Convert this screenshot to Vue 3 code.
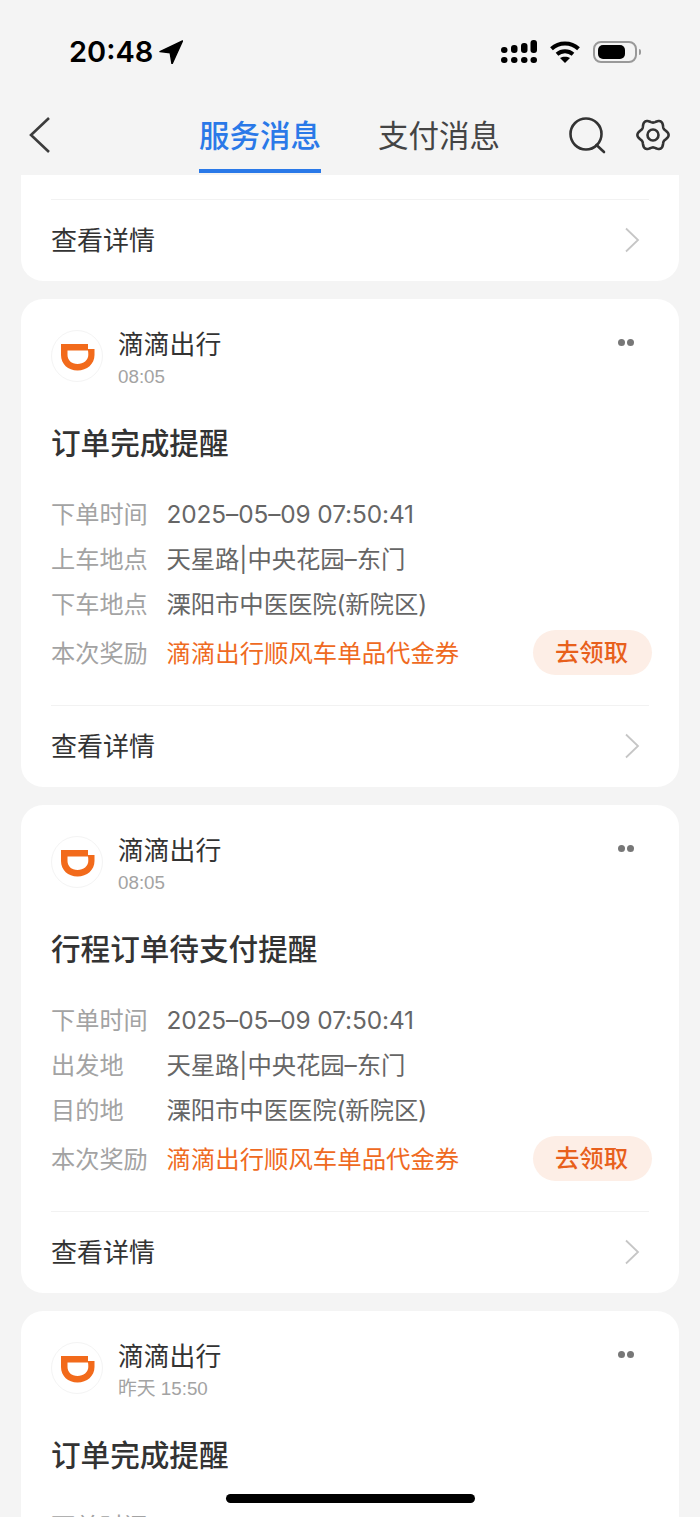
<template>
  <div class="phone">
    <!-- Status bar -->
    <div class="status-bar">
      <div class="clock">
        <span>20:48</span>
        <svg class="loc" width="24" height="24" viewBox="0 0 24 24">
          <path d="M23.500 1 1 11.600l10.200 1.200L13 24z" fill="#000" stroke="#000" stroke-width="1.400" stroke-linejoin="round" />
        </svg>
      </div>
      <div class="status-icons">
        <svg width="36" height="23" viewBox="0 0 36 23" fill="#000">
          <rect v-for="(d, i) in signalDots" :key="i" :x="d.x" :y="d.y" width="6.500" :height="d.h" rx="3" />
        </svg>
        <svg class="wifi" width="30" height="22" viewBox="0 0 30 22" fill="none" stroke="#000" stroke-width="4">
          <path d="M1.500 7.800C9 .8 21 .8 28.500 7.800" />
          <path d="M7 13.200c4.600-4 11.400-4 16 0" />
          <path d="M15 22 10 17c2.800-1.700 7.200-1.700 10 0z" fill="#000" stroke="none" />
        </svg>
        <div class="battery">
          <div class="battery-fill"></div>
        </div>
        <div class="battery-cap"></div>
      </div>
    </div>

    <!-- Nav -->
    <div class="nav">
      <svg class="back" width="24" height="36" viewBox="0 0 24 36" fill="none" stroke="#3c3c3c" stroke-width="2.600">
        <path d="M22 1 4 18 22 35" />
      </svg>
      <div class="tabs">
        <div
          v-for="(tab, index) in tabs"
          :key="tab"
          :class="['tab', { active: index === 0 }]"
        >
          {{ tab }}
        </div>
      </div>
      <svg class="search" width="38" height="38" viewBox="0 0 38 38" fill="none" stroke="#333" stroke-width="2.600">
        <circle cx="17" cy="17" r="15.500" />
        <path d="M27.500 28 35 35" stroke-linecap="round" />
      </svg>
      <svg class="gear" width="34" height="34" viewBox="0 0 34 34" fill="none" stroke="#333" stroke-width="2.600" stroke-linejoin="round">
        <path :d="gearPath" />
        <circle cx="17" cy="17" r="5.500" />
      </svg>
    </div>

    <!-- Message list -->
    <div class="list">
      <div class="card card-cut">
        <div class="detail">
          <span>查看详情</span>
          <svg width="16" height="26" viewBox="0 0 16 26" fill="none" stroke="#c6c6c6" stroke-width="1.800">
            <path d="M2 1.500 14 13 2 24.500" />
          </svg>
        </div>
      </div>

      <div v-for="(msg, i) in messages" :key="i" class="card">
        <div class="card-head">
          <div class="logo">
            <svg width="34" height="27" viewBox="0 0 34 27">
              <path
                fill-rule="evenodd"
                fill="#f26a1b"
                d="M0 0H27V5H33.500V11C33.500 20 26 26.500 16.500 26.500S0 20 0 11ZM6.500 6.500H27C27.300 7.800 27.300 9.500 27.300 11 27.300 16 22.500 20 16.500 20S6.500 16 6.500 11Z"
              />
            </svg>
          </div>
          <div class="head-text">
            <div class="app-name">滴滴出行</div>
            <div class="time">{{ msg.time }}</div>
          </div>
          <div class="more">
            <i></i>
            <i></i>
          </div>
        </div>
        <div class="title">{{ msg.title }}</div>
        <div class="rows">
          <div v-for="row in msg.rows" :key="row.label" :class="['row', { 'row-reward': row.reward }]">
            <span class="label">{{ row.label }}</span>
            <span :class="['value', { reward: row.reward }]">{{ row.value }}</span>
            <span v-if="row.reward" class="claim">去领取</span>
          </div>
        </div>
        <div class="detail">
          <span>查看详情</span>
          <svg width="16" height="26" viewBox="0 0 16 26" fill="none" stroke="#c6c6c6" stroke-width="1.800">
            <path d="M2 1.500 14 13 2 24.500" />
          </svg>
        </div>
      </div>
    </div>

    <div class="home-bar"></div>
  </div>
</template>

<script setup>
const tabs = ['服务消息', '支付消息']

// signal: 4 columns, the top dots grow into bars
const signalDots = [
  { x: 0, y: 7, h: 6 },
  { x: 0, y: 17, h: 6 },
  { x: 10, y: 5, h: 8 },
  { x: 10, y: 17, h: 6 },
  { x: 20, y: 3, h: 10 },
  { x: 20, y: 17, h: 6 },
  { x: 29.500, y: 0, h: 13 },
  { x: 29.500, y: 17, h: 6 }
]

// wavy ring with 6 lobes for the settings icon
const gearPoints = []
for (let i = 0; i < 120; i++) {
  const a = (i / 120) * Math.PI * 2
  const r = 14 + 1.6 * Math.cos(6 * a)
  gearPoints.push(`${(17 + r * Math.cos(a)).toFixed(2)} ${(17 + r * Math.sin(a)).toFixed(2)}`)
}
const gearPath = `M${gearPoints.join('L')}Z`

const reward = { label: '本次奖励', value: '滴滴出行顺风车单品代金券', reward: true }
const when = { label: '下单时间', value: '2025–05–09 07:50:41' }

const messages = [
  {
    time: '08:05',
    title: '订单完成提醒',
    rows: [
      when,
      { label: '上车地点', value: '天星路|中央花园–东门' },
      { label: '下车地点', value: '溧阳市中医医院(新院区)' },
      reward
    ]
  },
  {
    time: '08:05',
    title: '行程订单待支付提醒',
    rows: [
      when,
      { label: '出发地', value: '天星路|中央花园–东门' },
      { label: '目的地', value: '溧阳市中医医院(新院区)' },
      reward
    ]
  },
  {
    time: '昨天 15:50',
    title: '订单完成提醒',
    rows: [when]
  }
]
</script>

<style>
html,
body {
  margin: 0;
  background: #f4f4f4;
}
</style>

<style scoped>
.phone {
  position: relative;
  width: 700px;
  height: 1517px;
  overflow: hidden;
  background: #f4f4f4;
  font-family: "Liberation Sans", "Noto Sans CJK SC", sans-serif;
  color: #333;
}

.status-bar {
  height: 104px;
  box-sizing: border-box;
  padding: 37px 59px 0 69px;
  display: flex;
  justify-content: space-between;
  align-items: flex-start;
}

.clock {
  display: flex;
  align-items: center;
  gap: 6px;
  font-family: Inter, "Liberation Sans", sans-serif;
  font-size: 29px;
  font-weight: 600;
  line-height: 30px;
  color: #000;
}

.status-icons {
  display: flex;
  align-items: center;
  margin-top: 3px;
}

.wifi {
  margin: 0 13px 0 13px;
}

.battery {
  width: 44px;
  height: 22px;
  box-sizing: border-box;
  padding: 2px 3px;
  border: 2px solid #999;
  border-radius: 8px;
}

.battery-fill {
  width: 27px;
  height: 14px;
  background: #000;
  border-radius: 5px;
}

.battery-cap {
  width: 2px;
  height: 6px;
  margin-left: 2px;
  background: #999;
  border-radius: 0 2px 2px 0;
}

.nav {
  position: relative;
  height: 71px;
  display: flex;
  align-items: flex-start;
}

.back {
  margin: 13px 0 0 27px;
}

.tabs {
  display: flex;
  gap: 57px;
  margin-left: 148px;
}

.tab {
  height: 69px;
  box-sizing: border-box;
  padding: 10px 0 0;
  font-size: 30.500px;
  line-height: 44px;
  color: #444;
  border-bottom: 0 solid #2a79e8;
}

.tab.active {
  font-weight: 500;
  color: #2a79e8;
  border-bottom-width: 4px;
}

.search {
  margin: 13px 0 0 69px;
}

.gear {
  margin: 14px 0 0 29px;
}

.list {
  display: flex;
  flex-direction: column;
  gap: 18px;
  padding: 0 21px;
}

.card {
  background: #fff;
  border-radius: 22px;
  padding: 0 30px;
  height: 488px;
  box-sizing: border-box;
  flex-shrink: 0;
  display: flex;
  flex-direction: column;
}

.card-cut {
  height: 106px;
  border-radius: 0 0 22px 22px;
  padding-top: 24px;
}

.card-head {
  display: flex;
  align-items: flex-start;
  padding-top: 31px;
}

.logo {
  width: 50px;
  height: 50px;
  border: 1px solid #f4f4f4;
  border-radius: 50%;
  display: flex;
  align-items: center;
  justify-content: center;
  flex-shrink: 0;
}

.logo svg {
  margin: 3px 0 0 2px;
}

.head-text {
  margin-left: 15px;
  flex: 1;
}

.app-name {
  font-size: 25.800px;
  line-height: 30px;
  color: #333;
}

.time {
  font-size: 18.800px;
  line-height: 22px;
  margin-top: 6px;
  color: #a3a3a3;
}

.more {
  display: flex;
  gap: 2px;
  margin: 9px 15px 0 0;
}

.more i {
  width: 7px;
  height: 7px;
  border-radius: 50%;
  background: #777;
}

.title {
  margin-top: 36px;
  font-size: 29.600px;
  line-height: 40px;
  font-weight: 500;
  color: #333;
}

.rows {
  margin-top: 28px;
  flex: 1;
}

.row {
  position: relative;
  display: flex;
  align-items: baseline;
  height: 45px;
  line-height: 45px;
  font-size: 24.200px;
}

.row-reward {
  margin-top: 4px;
}

.label {
  width: 115.500px;
  flex-shrink: 0;
  color: #a3a3a3;
}

.value {
  font-family: Inter, "Noto Sans CJK SC", sans-serif;
  font-size: 24.400px;
  letter-spacing: -0.1px;
  color: #666;
}

.value.reward {
  letter-spacing: 0;
  color: #ef6a22;
}

.claim {
  position: absolute;
  right: -3px;
  top: -1px;
  width: 119px;
  height: 45px;
  box-sizing: border-box;
  padding-right: 2px;
  border-radius: 23px;
  background: #fdeee6;
  color: #e8601c;
  font-size: 24.400px;
  font-weight: 500;
  line-height: 45px;
  text-align: center;
}

.detail {
  display: flex;
  align-items: center;
  justify-content: space-between;
  height: 82px;
  box-sizing: border-box;
  border-top: 1px solid #f2f2f2;
  font-size: 26px;
  color: #333;
  padding-right: 9px;
  padding-bottom: 2px;
}

.detail span {
  margin-bottom: 3px;
}

.home-bar {
  position: absolute;
  left: 226px;
  top: 1494px;
  width: 249px;
  height: 9px;
  border-radius: 5px;
  background: #000;
}
</style>
